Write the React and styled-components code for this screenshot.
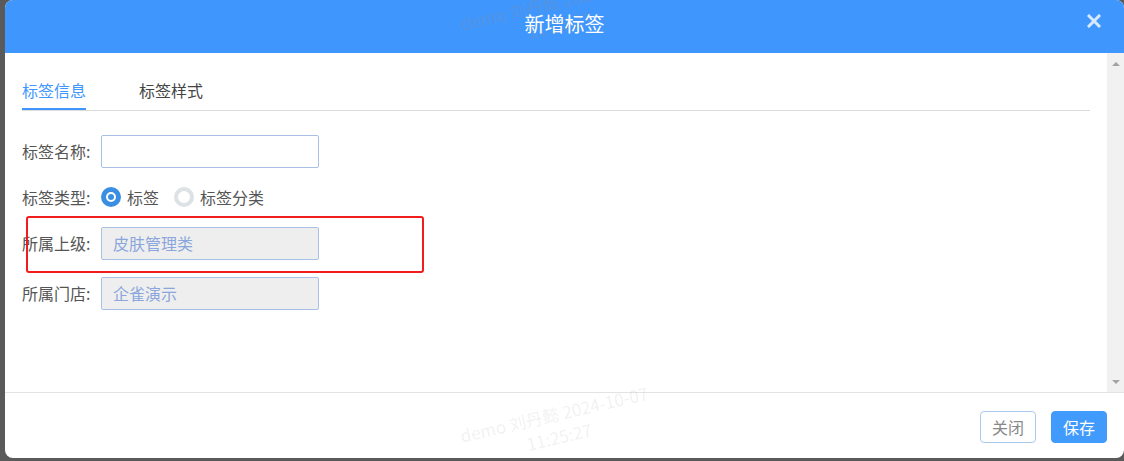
import { createGlobalStyle } from "styled-components";
import styled from "styled-components";

const GlobalStyle = createGlobalStyle`
  html, body {
    margin: 0;
    padding: 0;
    background: #5a5a5a;
  }
  body {
    font-family: "Microsoft YaHei", "Noto Sans CJK SC", "Liberation Sans", sans-serif;
  }
`;

function App() {
  return (
    <Page>
      <GlobalStyle />
      <Dialog>
        <Header>
          <span />
          <Title>新增标签</Title>
          <CloseBtn>
            <svg width="14" height="14" viewBox="0 0 14 14">
              <path d="M2 2 L12 12 M12 2 L2 12" stroke="#d8e8ff" strokeWidth="3" strokeLinecap="square" />
            </svg>
          </CloseBtn>
        </Header>

        <Main>
          <Content>
            <TabBar>
              <Tab active>标签信息</Tab>
              <Tab>标签样式</Tab>
            </TabBar>

            <Form>
              <Row>
                <Label>标签名称:</Label>
                <Input type="text" />
              </Row>
              <Row small>
                <Label>标签类型:</Label>
                <RadioItem>
                  <Radio checked />
                  标签
                </RadioItem>
                <RadioItem>
                  <Radio />
                  标签分类
                </RadioItem>
              </Row>
              <Row>
                <Label>所属上级:</Label>
                <Input type="text" value="皮肤管理类" disabled readOnly />
              </Row>
              <Row>
                <Label>所属门店:</Label>
                <Input type="text" value="企雀演示" disabled readOnly />
              </Row>
            </Form>

            <Highlight />
          </Content>
          <ScrollBar>
            <Arrow />
            <Arrow down />
          </ScrollBar>
        </Main>

        <Footer>
          <Button>关闭</Button>
          <Button primary>保存</Button>
        </Footer>

        {/* repeated watermark, one tile over the header and one over the footer */}
        <Watermark top={-10} left={449} dark>
          demo 刘丹懿 2024-10-07
          <br />
          11:25:27
        </Watermark>
        <Watermark top={402} left={449}>
          demo 刘丹懿 2024-10-07
          <br />
          11:25:27
        </Watermark>
      </Dialog>
    </Page>
  );
}

export default App;

const Page = styled.div`
  width: 1124px;
  height: 461px;
  padding: 0 0 3px 5px;
  box-sizing: border-box;
  overflow: hidden;
`;

const Dialog = styled.div`
  width: 1119px;
  height: 458px;
  background: #fff;
  border-radius: 8px;
  overflow: hidden;
  display: flex;
  flex-direction: column;
  position: relative;
`;

const Header = styled.div`
  height: 53px;
  flex-shrink: 0;
  background: #3f97fe;
  display: grid;
  grid-template-columns: 1fr auto 1fr;
  align-items: center;
`;

const Title = styled.div`
  color: #fff;
  font-size: 20px;
  line-height: 28px;
  margin-bottom: 6px;
  position: relative;
  z-index: 1;
`;

const CloseBtn = styled.div`
  justify-self: end;
  margin-right: 23px;
  margin-bottom: 11px;
  width: 14px;
  height: 14px;
  display: flex;
`;

const Watermark = styled.div`
  position: absolute;
  top: ${(p) => p.top}px;
  left: ${(p) => p.left}px;
  width: 205px;
  font-family: "Noto Sans CJK SC", sans-serif;
  font-size: 17px;
  line-height: 23px;
  text-align: center;
  white-space: nowrap;
  color: ${(p) => (p.dark ? "rgba(120, 140, 170, 0.35)" : "rgba(110, 110, 110, 0.1)")};
  transform: rotate(-13deg);
  pointer-events: none;
`;

const Main = styled.div`
  flex: 1;
  display: flex;
  min-height: 0;
`;

const Content = styled.div`
  flex: 1;
  padding: 0 17px;
  position: relative;
`;

const TabBar = styled.div`
  display: flex;
  gap: 53px;
  padding-top: 25px;
  border-bottom: 1px solid #dcdcdc;
`;

const Tab = styled.div`
  font-size: 16px;
  line-height: 24px;
  padding-bottom: 6px;
  color: ${(p) => (p.active ? "#3f97fe" : "#444")};
  border-bottom: 2px solid ${(p) => (p.active ? "#3f97fe" : "transparent")};
`;

const Form = styled.div`
  margin-top: 24px;
  display: flex;
  flex-direction: column;
  gap: 18px;
`;

const Row = styled.div`
  display: flex;
  align-items: center;
  height: ${(p) => (p.small ? 24 : 32)}px;
`;

const Label = styled.div`
  width: 79px;
  font-size: 16px;
  color: #555;
  white-space: nowrap;
`;

const Input = styled.input`
  box-sizing: border-box;
  width: 218px;
  height: 33px;
  margin: 0;
  padding: 0 11px;
  border: 1px solid #a9c0e6;
  border-radius: 2px;
  font-family: inherit;
  font-size: 16px;
  color: #333;
  background: #fff;
  outline: none;

  &:disabled {
    background: #eeeeee;
    color: #8aa6dc;
    -webkit-text-fill-color: #8aa6dc;
    opacity: 1;
  }
`;

const RadioItem = styled.label`
  display: flex;
  align-items: center;
  gap: 6px;
  font-size: 16px;
  color: #555;
  margin-right: 15px;
`;

const Radio = styled.span`
  box-sizing: border-box;
  width: 20px;
  height: 20px;
  border-radius: 50%;
  background: #fff;
  border: ${(p) => (p.checked ? "5px solid #3b8fe2" : "4px solid #dde2e5")};
  display: flex;
  align-items: center;
  justify-content: center;

  &::after {
    content: "";
    width: 6px;
    height: 6px;
    border-radius: 50%;
    background: ${(p) => (p.checked ? "#3b8fe2" : "transparent")};
  }
`;

const Highlight = styled.div`
  position: absolute;
  left: 21px;
  top: 163px;
  width: 398px;
  height: 57px;
  box-sizing: border-box;
  border: 2px solid #f11d1d;
  border-radius: 3px;
  pointer-events: none;
`;

const ScrollBar = styled.div`
  width: 17px;
  flex-shrink: 0;
  background: #f1f1f1;
  display: flex;
  flex-direction: column;
  justify-content: space-between;
  align-items: center;
  padding: 9px 0 8px;
  box-sizing: border-box;
`;

const Arrow = styled.span`
  width: 0;
  height: 0;
  border-left: 4px solid transparent;
  border-right: 4px solid transparent;
  ${(p) =>
    p.down ? "border-top: 4px solid #a3a3a3;" : "border-bottom: 4px solid #a3a3a3;"}
`;

const Footer = styled.div`
  height: 66px;
  flex-shrink: 0;
  border-top: 1px solid #e3e3e3;
  display: flex;
  justify-content: flex-end;
  align-items: flex-start;
  gap: 15px;
  padding: 18px 17px 0;
  box-sizing: border-box;
`;

const Button = styled.button`
  width: 56px;
  height: 32px;
  padding: 0;
  border-radius: 4px;
  font-family: inherit;
  font-size: 16px;
  border: 1px solid ${(p) => (p.primary ? "#419bfc" : "#a9c9f1")};
  background: ${(p) => (p.primary ? "#419bfc" : "#fff")};
  color: ${(p) => (p.primary ? "#fff" : "#888")};
`;
